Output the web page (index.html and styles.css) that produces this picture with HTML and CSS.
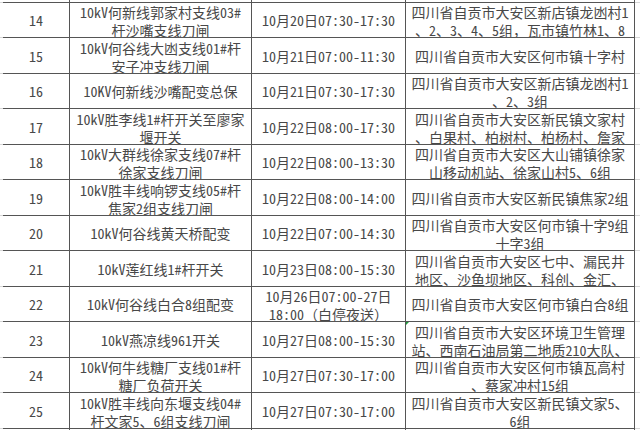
FILE: index.html
```html
<!DOCTYPE html>
<html lang="zh-CN">
<head>
<meta charset="utf-8">
<title>停电计划</title>
<link rel="stylesheet" href="styles.css">
</head>
<body>
<div class="sheet">
  <div class="row top"><div class="c edge"></div><div class="c"></div><div class="c"></div><div class="c"></div><div class="c"></div><div class="c edge r"></div></div>

  <div class="row h35"><div class="c edge"></div><div class="c">14</div><div class="c"><span>10kV何新线郭家村支线03#<br>杆沙嘴支线刀闸</span></div><div class="c">10月20日07:30-17:30</div><div class="c"><span>四川省自贡市大安区新店镇龙凼村1<br>、2、3、4、5组，瓦市镇竹林1、8</span></div><div class="c edge r"></div></div>

  <div class="row h36"><div class="c edge"></div><div class="c">15</div><div class="c"><span>10kV何谷线大凼支线01#杆<br>安子冲支线刀闸</span></div><div class="c">10月21日07:00-11:30</div><div class="c">四川省自贡市大安区何市镇十字村</div><div class="c edge r"></div></div>

  <div class="row h35"><div class="c edge"></div><div class="c">16</div><div class="c">10KV何新线沙嘴配变总保</div><div class="c">10月21日07:30-17:30</div><div class="c"><span>四川省自贡市大安区新店镇龙凼村1<br>、2、3组</span></div><div class="c edge r"></div></div>

  <div class="row h36"><div class="c edge"></div><div class="c">17</div><div class="c"><span>10kV胜李线1#杆开关至廖家<br>堰开关</span></div><div class="c">10月22日08:00-17:30</div><div class="c"><span>四川省自贡市大安区新民镇文家村<br>、白果村、柏树村、柏杨村、詹家</span></div><div class="c edge r"></div></div>

  <div class="row h35"><div class="c edge"></div><div class="c">18</div><div class="c"><span>10kV大群线徐家支线07#杆<br>徐家支线刀闸</span></div><div class="c">10月22日08:00-13:30</div><div class="c"><span>四川省自贡市大安区大山铺镇徐家<br>山移动机站、徐家山村5、6组</span></div><div class="c edge r"></div></div>

  <div class="row h36"><div class="c edge"></div><div class="c">19</div><div class="c"><span>10kV胜丰线响锣支线05#杆<br>焦家2组支线刀闸</span></div><div class="c">10月22日08:00-14:00</div><div class="c">四川省自贡市大安区新民镇焦家2组</div><div class="c edge r"></div></div>

  <div class="row h35"><div class="c edge"></div><div class="c">20</div><div class="c">10kV何谷线黄天桥配变</div><div class="c">10月22日07:00-14:30</div><div class="c"><span>四川省自贡市大安区何市镇十字9组<br>十字3组</span></div><div class="c edge r"></div></div>

  <div class="row h36"><div class="c edge"></div><div class="c">21</div><div class="c">10kV莲红线1#杆开关</div><div class="c">10月23日08:00-15:30</div><div class="c"><span>四川省自贡市大安区七中、漏民井<br>地区、沙鱼坝地区、科创、金汇、</span></div><div class="c edge r"></div></div>

  <div class="row h35"><div class="c edge"></div><div class="c">22</div><div class="c">10kV何谷线白合8组配变</div><div class="c"><span>10月26日07:00-27日<br>18:00（白停夜送）</span></div><div class="c">四川省自贡市大安区何市镇白合8组</div><div class="c edge r"></div></div>

  <div class="row h36"><div class="c edge"></div><div class="c">23</div><div class="c">10kV燕凉线961开关</div><div class="c">10月27日08:00-15:30</div><div class="c flag"><span>四川省自贡市大安区环境卫生管理<br>站、西南石油局第二地质210大队、</span></div><div class="c edge r"></div></div>

  <div class="row h35"><div class="c edge"></div><div class="c">24</div><div class="c"><span>10kV何牛线糖厂支线01#杆<br>糖厂负荷开关</span></div><div class="c">10月27日07:30-17:00</div><div class="c"><span>四川省自贡市大安区何市镇瓦高村<br>、蔡家冲村15组</span></div><div class="c edge r"></div></div>

  <div class="row h36"><div class="c edge"></div><div class="c">25</div><div class="c"><span>10kV胜丰线向东堰支线04#<br>杆文家5、6组支线刀闸</span></div><div class="c">10月27日07:30-17:00</div><div class="c"><span>四川省自贡市大安区新民镇文家5、<br>6组</span></div><div class="c edge r"></div></div>

  <div class="row h35"><div class="c edge"></div><div class="c"></div><div class="c"></div><div class="c"></div><div class="c"></div><div class="c edge r"></div></div>
</div>
</body>
</html>
```

FILE: styles.css
```css
html, body {
  margin: 0;
  padding: 0;
  background: #ffffff;
}

.sheet {
  width: 640px;
  height: 430px;
  overflow: hidden;
  font-family: "Noto Sans Mono CJK SC", "Noto Sans CJK SC", sans-serif;
  font-size: 14px;
  font-weight: 300;
  color: #484848;
}

.row {
  display: grid;
  grid-template-columns: 3px 67px 182px 154px 229px 5px;
}

.row.top { height: 3px; }
.row.h35 { height: 35px; }
.row.h36 { height: 36px; }

.c {
  box-sizing: border-box;
  border-right: 1px solid #555555;
  border-bottom: 1px solid #555555;
  display: flex;
  align-items: center;
  justify-content: center;
  text-align: center;
  white-space: nowrap;
  overflow: hidden;
  line-height: 18px;
}

.c span {
  display: block;
  padding-top: 2px;
}

.c.edge {
  border-right: none;
  border-bottom: 1px solid #d6d6d6;
}

.c.flag {
  position: relative;
}

.c.flag::before {
  content: "";
  position: absolute;
  left: 0;
  top: 0;
  width: 0;
  height: 0;
  border-top: 3px solid #1e9b3c;
  border-right: 3px solid transparent;
}
```
